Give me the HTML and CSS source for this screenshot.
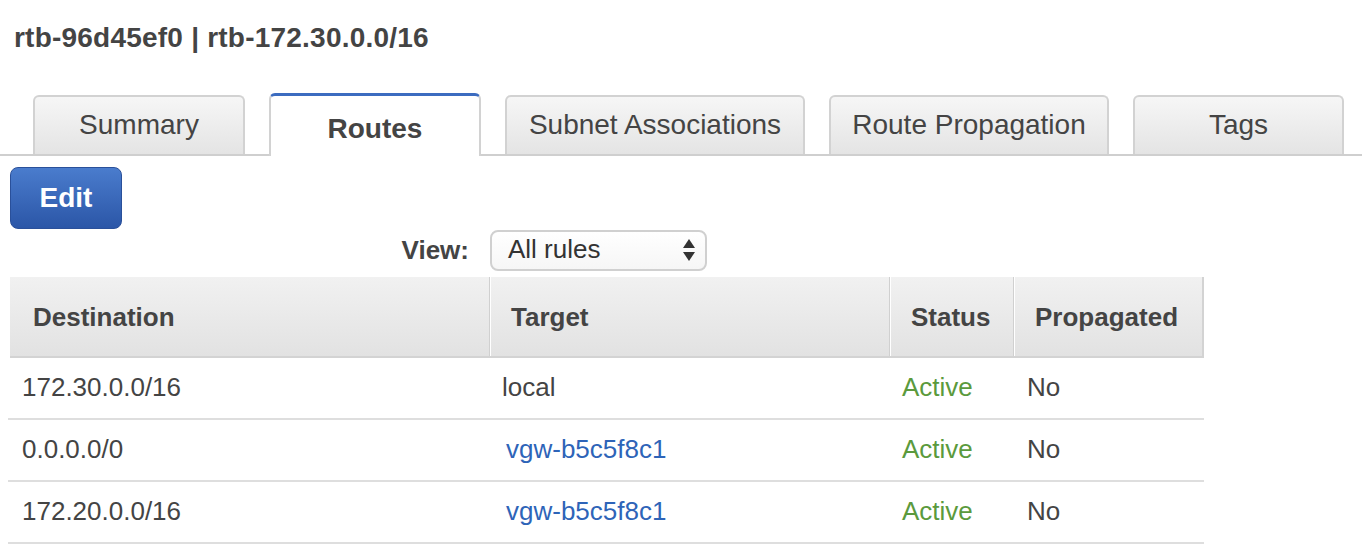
FILE: index.html
```html
<!DOCTYPE html>
<html>
<head>
<meta charset="utf-8">
<link rel="stylesheet" href="styles.css">
</head>
<body>
<h1 class="title">rtb-96d45ef0 | rtb-172.30.0.0/16</h1>
<div class="tabs">
  <div class="tab tab-summary">Summary</div>
  <div class="tab tab-active tab-routes">Routes</div>
  <div class="tab tab-subnet">Subnet Associations</div>
  <div class="tab tab-prop">Route Propagation</div>
  <div class="tab tab-tags">Tags</div>
</div>
<button class="btn-edit">Edit</button>
<div class="view-row">
  <span class="view-label">View:</span>
  <div class="select">
    <span>All rules</span>
    <svg class="arrows" width="14" height="24" viewBox="0 0 14 24"><path d="M7 1 L13 10 L1 10 Z" fill="#333"/><path d="M1 14 L13 14 L7 23 Z" fill="#333"/></svg>
  </div>
</div>
<div class="table">
  <div class="thead">
    <div class="th c1">Destination</div>
    <div class="th c2">Target</div>
    <div class="th c3">Status</div>
    <div class="th c4">Propagated</div>
  </div>
  <div class="tr">
    <div class="td c1">172.30.0.0/16</div>
    <div class="td c2">local</div>
    <div class="td c3 active">Active</div>
    <div class="td c4">No</div>
  </div>
  <div class="tr">
    <div class="td c1">0.0.0.0/0</div>
    <div class="td c2 link">vgw-b5c5f8c1</div>
    <div class="td c3 active">Active</div>
    <div class="td c4">No</div>
  </div>
  <div class="tr">
    <div class="td c1">172.20.0.0/16</div>
    <div class="td c2 link">vgw-b5c5f8c1</div>
    <div class="td c3 active">Active</div>
    <div class="td c4">No</div>
  </div>
</div>
</body>
</html>
```
FILE: styles.css
```css
* { box-sizing: border-box; }
html, body { margin: 0; padding: 0; background: #fff; }
body {
  font-family: "Liberation Sans", Arial, Helvetica, sans-serif;
  color: #444;
  width: 1362px;
  height: 560px;
  overflow: hidden;
}
.title {
  margin: 0;
  padding: 22px 0 0 14px;
  font-size: 28px;
  line-height: 32px;
  font-weight: bold;
  letter-spacing: 0.22px;
  color: #444;
}
.tabs {
  margin-top: 41px;
  display: flex;
  align-items: flex-end;
  gap: 24px;
  padding-left: 33px;
  border-bottom: 2px solid #cfcfcf;
  height: 61px;
}
.tab {
  height: 59px;
  border: 2px solid #d2d2d2;
  border-bottom: none;
  border-radius: 6px 6px 0 0;
  background: linear-gradient(#f6f6f6, #e4e4e4);
  font-size: 28px;
  color: #444;
  display: flex;
  align-items: center;
  justify-content: center;
  padding-bottom: 2px;
}
.tab-summary { width: 212px; }
.tab-routes { width: 212px; }
.tab-subnet { width: 300px; }
.tab-prop { width: 280px; }
.tab-tags { width: 211px; }
.tab-active {
  height: 63px;
  margin-bottom: -2px;
  background: #fff;
  border-top: 3px solid #3c6cc0;
  font-weight: bold;
  padding-top: 8px;
}
.btn-edit {
  display: flex;
  align-items: center;
  justify-content: center;
  margin: 11px 0 0 10px;
  width: 112px;
  height: 62px;
  border: 1px solid #2a509a;
  border-radius: 8px;
  background: linear-gradient(#4a7ccd, #2b56a7);
  color: #fff;
  font-family: "Liberation Sans", Arial, Helvetica, sans-serif;
  font-size: 28px;
  font-weight: bold;
  padding: 0;
}
.view-row {
  margin-top: 1px;
  width: 707px;
  display: flex;
  justify-content: flex-end;
  align-items: center;
  gap: 21px;
}
.view-label {
  font-size: 26px;
  font-weight: bold;
  color: #444;
}
.select {
  width: 217px;
  height: 41px;
  border: 2px solid #d0d0d0;
  border-radius: 8px;
  background: linear-gradient(#ffffff, #f6f6f6);
  display: flex;
  align-items: center;
  justify-content: space-between;
  padding: 0 9px 2px 16px;
  font-size: 26px;
  color: #333;
}
.arrows { display: block; }
.table {
  margin: 6px 0 0 10px;
  width: 1194px;
}
.thead, .tr {
  display: grid;
  grid-template-columns: 479px 400px 124px 191px;
}
.thead {
  height: 81px;
  background: linear-gradient(#f1f1f1, #e2e2e2);
  border-bottom: 2px solid #d3d3d3;
  border-right: 2px solid #d3d3d3;
}
.th {
  font-size: 26px;
  font-weight: bold;
  color: #444;
  display: flex;
  align-items: center;
  padding-left: 21px;
  padding-top: 2px;
}
.th.c1 { padding-left: 23px; }
.th.c2, .th.c3, .th.c4 {
  border-left: 1px solid #d0d0d0;
  box-shadow: inset 1px 0 0 #fff;
}
.tr {
  height: 62px;
  border-bottom: 2px solid #dedede;
  margin-left: -2px;
  padding-left: 2px;
  width: 1196px;
}
.td {
  font-size: 26px;
  color: #444;
  display: flex;
  align-items: center;
  padding-left: 12px;
  padding-bottom: 1px;
}
.td.c2 { padding-left: 13px; }
.td.c3 { padding-left: 13px; }
.td.c4 { padding-left: 14px; }
.td.link { color: #2e64b8; padding-left: 17px; }
.td.active { color: #5b9a3d; }
```
